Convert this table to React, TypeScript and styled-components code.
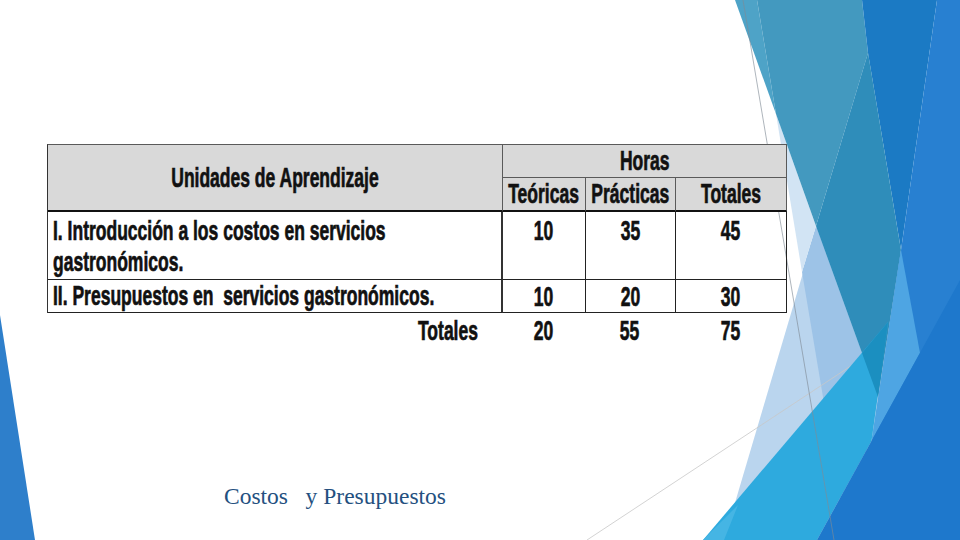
import React from "react";
import styled, { createGlobalStyle } from "styled-components";

const Global = createGlobalStyle`
  html, body { margin: 0; padding: 0; background: #ffffff; }
  #root { width: 960px; height: 540px; }
`;

const Slide = styled.div`
  position: relative;
  width: 960px;
  height: 540px;
  overflow: hidden;
  background: #ffffff;
  box-sizing: border-box;
  padding: 144px 0 0 47px;
  display: flex;
  flex-direction: column;
`;

const Decor = styled.svg`
  position: absolute;
  left: 0;
  top: 0;
  width: 960px;
  height: 540px;
  z-index: 0;
`;

const Content = styled.div`
  position: relative;
  z-index: 1;
  display: flex;
  flex-direction: column;
  flex: 1;
  font-family: "Liberation Sans", Arial, sans-serif;
  font-weight: 700;
  font-size: 28px;
  color: #111111;
`;

const Grid = styled.div`
  display: grid;
  grid-template-columns: 455px 83px 90px 111px;
  grid-template-rows: 33px 34px 68px 33px;
  width: 740px;
  box-sizing: border-box;
  border-top: 1px solid #5a5a5a;
  border-left: 1.5px solid #333333;
`;

const HeadCell = styled.div<{ $thick?: boolean; $col: string; $row: string }>`
  grid-column: ${(p) => p.$col};
  grid-row: ${(p) => p.$row};
  box-sizing: border-box;
  display: flex;
  justify-content: center;
  align-items: center;
  background: #d9d9d9;
  border-right: 1px solid #5a5a5a;
  border-bottom: ${(p) => (p.$thick ? "2px solid #111111" : "1px solid #5a5a5a")};
  line-height: 1;
`;

const TextCell = styled.div<{ $pad: number }>`
  box-sizing: border-box;
  display: block;
  padding: ${(p) => p.$pad}px 0 0 5px;
  border-right: 2px solid #333333;
  border-bottom: 1.5px solid #222222;
  line-height: 31px;
  white-space: nowrap;
  text-align: left;
  overflow: visible;
`;

const NumCell = styled.div<{ $pad: number }>`
  box-sizing: border-box;
  display: flex;
  justify-content: center;
  align-items: flex-start;
  padding-top: ${(p) => p.$pad}px;
  border-right: 1px solid #222222;
  border-bottom: 1.5px solid #222222;
  line-height: 31px;
`;

const Narrow = styled.span<{ $origin?: string }>`
  display: inline-block;
  flex-shrink: 0;
  white-space: nowrap;
  transform: scaleX(0.625);
  transform-origin: ${(p) => p.$origin || "center"};
  -webkit-text-stroke: 0.7px #111111;
`;

const TotalsRow = styled.div`
  display: grid;
  grid-template-columns: 455px 83px 90px 111px;
  height: 35px;
  width: 740px;
  line-height: 1;
`;

const TotalCell = styled.div<{ $right?: boolean }>`
  display: flex;
  align-items: center;
  justify-content: ${(p) => (p.$right ? "flex-end" : "center")};
  padding-right: ${(p) => (p.$right ? "24px" : "0")};
`;

const Footer = styled.div`
  margin-top: auto;
  padding: 0 0 32px 177px;
  font-family: "Liberation Serif", "Times New Roman", serif;
  font-weight: 400;
  font-size: 23.5px;
  line-height: 1;
  color: #24507f;
  white-space: pre;
`;

type Poly = { pts: string; fill: string };

const under: Poly[] = [
  { pts: "868,53 724,540 947,540", fill: "#bad5ee" },
  { pts: "816,226 878,397 847,540 802,272", fill: "#9dc3e7" },
  { pts: "776,114 816,226 802,272", fill: "#d2e4f4" },
];

const over: Poly[] = [
  { pts: "735,0 757,0 776,114", fill: "#4ea3c7" },
  { pts: "757,0 862,0 868,53 816,226 776,114", fill: "#4399bf" },
  { pts: "862,0 937,0 901,250 868,53", fill: "#1b7ac4" },
  { pts: "868,53 901,250 878,397 816,226", fill: "#2f8dba" },
  { pts: "937,0 960,0 960,540 857,540 901,250", fill: "#2880d1" },
  { pts: "901,250 920,353 871.5,441", fill: "#4ea5e3" },
  { pts: "703,540 888,322 871.5,441 817,540", fill: "#2eaade" },
  { pts: "703,540 738,505 724,540", fill: "#45b5e4" },
  { pts: "862,353 888,322 878,397", fill: "#1b8fc0" },
  { pts: "960,280 960,540 817,540", fill: "#1e78cc" },
  { pts: "0,315 35,540 0,540", fill: "#2e7fcb" },
];

const rows = [
  { label: ["I. Introducción a los costos en servicios", "gastronómicos."], nums: ["10", "35", "45"], pad: 3 },
  { label: ["II. Presupuestos en\u00a0 servicios gastronómicos."], nums: ["10", "20", "30"], pad: 0 },
];

export default function App() {
  return (
    <>
      <Global />
      <Slide>
        <Decor viewBox="0 0 960 540">
          {under.map((s, i) => (
            <polygon key={"u" + i} points={s.pts} fill={s.fill} />
          ))}
          <line x1="587" y1="540" x2="960" y2="294" stroke="#c8c8c8" strokeWidth="0.8" />
          {over.map((s, i) => (
            <polygon key={"o" + i} points={s.pts} fill={s.fill} />
          ))}
          <line x1="743" y1="0" x2="834" y2="540" stroke="#7f8a95" strokeWidth="0.8" strokeOpacity="0.8" />
        </Decor>
        <Content>
          <Grid>
            <HeadCell $thick $col="1" $row="1 / 3">
              <Narrow>Unidades de Aprendizaje</Narrow>
            </HeadCell>
            <HeadCell $col="2 / 5" $row="1">
              <Narrow>Horas</Narrow>
            </HeadCell>
            <HeadCell $thick $col="2" $row="2">
              <Narrow>Teóricas</Narrow>
            </HeadCell>
            <HeadCell $thick $col="3" $row="2">
              <Narrow>Prácticas</Narrow>
            </HeadCell>
            <HeadCell $thick $col="4" $row="2">
              <Narrow>Totales</Narrow>
            </HeadCell>
            {rows.map((r, i) => (
              <React.Fragment key={i}>
                <TextCell $pad={r.pad}>
                  <Narrow $origin="left">
                    {r.label.map((l, j) => (
                      <React.Fragment key={j}>
                        {j > 0 && <br />}
                        {l}
                      </React.Fragment>
                    ))}
                  </Narrow>
                </TextCell>
                {r.nums.map((n, j) => (
                  <NumCell key={j} $pad={r.pad === 3 ? 3 : 1}>
                    <Narrow>{n}</Narrow>
                  </NumCell>
                ))}
              </React.Fragment>
            ))}
          </Grid>
          <TotalsRow>
            <TotalCell $right>
              <Narrow $origin="right">Totales</Narrow>
            </TotalCell>
            <TotalCell>
              <Narrow>20</Narrow>
            </TotalCell>
            <TotalCell>
              <Narrow>55</Narrow>
            </TotalCell>
            <TotalCell>
              <Narrow>75</Narrow>
            </TotalCell>
          </TotalsRow>
          <Footer>{"Costos   y Presupuestos"}</Footer>
        </Content>
      </Slide>
    </>
  );
}
